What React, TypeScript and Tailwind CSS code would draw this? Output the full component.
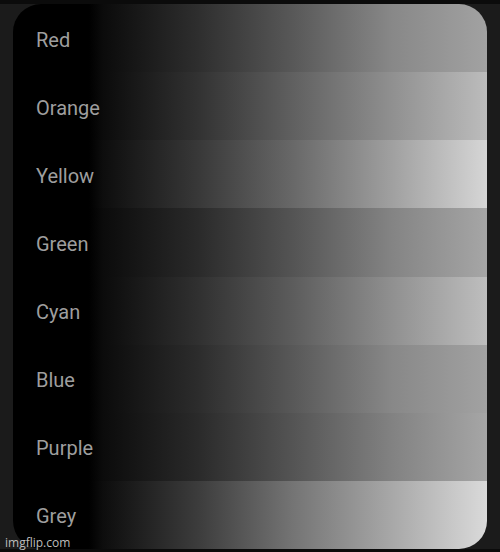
import React from "react";

const ROWS = [
  { name: "Red", bg: "bg-[linear-gradient(to_right,#000_16%,#0b0b0b_19%,#2e2e2e_39%,#585858_59%,#888888_80%,#a2a2a2)]" },
  { name: "Orange", bg: "bg-[linear-gradient(to_right,#000_16%,#0b0b0b_19%,#323232_39%,#606060_59%,#909090_80%,#bcbcbc)]" },
  { name: "Yellow", bg: "bg-[linear-gradient(to_right,#000_16%,#0d0d0d_19%,#383838_39%,#686868_59%,#a0a0a0_80%,#d6d6d6)]" },
  { name: "Green", bg: "bg-[linear-gradient(to_right,#000_16%,#0b0b0b_19%,#2a2a2a_39%,#545454_59%,#848484_80%,#a6a6a6)]" },
  { name: "Cyan", bg: "bg-[linear-gradient(to_right,#000_16%,#0b0b0b_19%,#303030_39%,#5c5c5c_59%,#909090_80%,#bebebe)]" },
  { name: "Blue", bg: "bg-[linear-gradient(to_right,#000_16%,#0b0b0b_19%,#2c2c2c_39%,#585858_59%,#888888_80%,#a2a2a2)]" },
  { name: "Purple", bg: "bg-[linear-gradient(to_right,#000_16%,#0b0b0b_19%,#2a2a2a_39%,#545454_59%,#828282_80%,#a6a6a6)]" },
  { name: "Grey", bg: "bg-[linear-gradient(to_right,#000_16%,#0d0d0d_19%,#3c3c3c_39%,#747474_59%,#a8a8a8_80%,#dadada)]" },
];

export default function App() {
  return (
    <div className="relative w-[500px] h-[552px] bg-[#1b1b1b] overflow-hidden font-['Roboto',sans-serif]">
      <div className="h-[4px] bg-[#0b0b0b]" />
      <div className="ml-[13px] w-[474px] h-[545px] rounded-[28px] overflow-hidden flex flex-col">
        {ROWS.map((row) => (
          <div key={row.name} className={`flex-1 flex items-center pl-[23px] pt-[3px] ${row.bg}`}>
            <span className="text-[20px] leading-none text-[#9e9e9e]">{row.name}</span>
          </div>
        ))}
      </div>
      <div className="h-[3px] bg-[#0b0b0b]" />
      <span className="absolute left-[5px] bottom-[3px] text-[12px] leading-none text-[#bdbdbd] font-['Open_Sans',sans-serif]">
        imgflip.com
      </span>
    </div>
  );
}
